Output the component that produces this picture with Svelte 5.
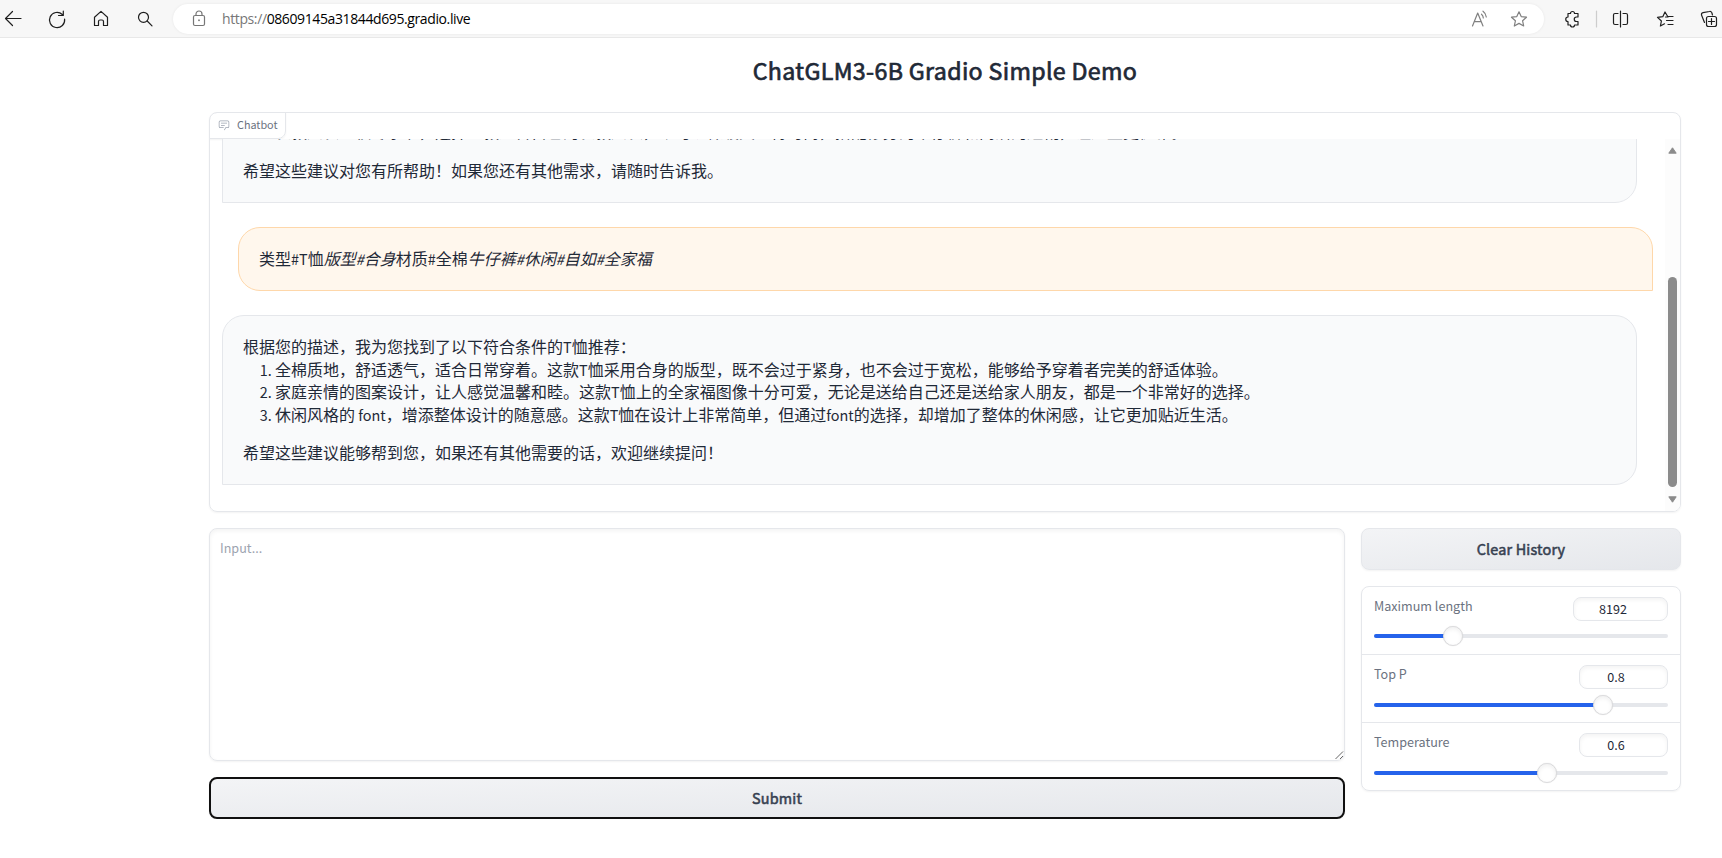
<script>
  const sliders = [
    { label: 'Maximum length', value: '8192', fill: 26.9, width: 95 },
    { label: 'Top P', value: '0.8', fill: 77.9, width: 89 },
    { label: 'Temperature', value: '0.6', fill: 58.7, width: 89 }
  ];
</script>

<header class="bar">
  <svg class="chrome" width="172" height="37" viewBox="0 0 172 37">
    <path d="M5.500 18.500H21M12.500 11.500L5.500 18.500L12.500 25.500" />
    <path d="M62.300 14.500A7.600 7.600 0 1 0 64.600 19M63.300 11V15.500H58.500" />
    <path d="M94.500 17.200L101 11.400L107.500 17.200V25.500H103.500V21.500A1.500 1.500 0 0 0 102 20H100A1.500 1.500 0 0 0 98.500 21.500V25.500H94.500Z" />
    <circle cx="143.500" cy="17.300" r="5" /><path d="M147.200 21L152 25.800" />
  </svg>
  <div class="address">
    <svg class="lock" width="14" height="18" viewBox="0 0 14 18">
      <rect x="1.500" y="5.500" width="11" height="10" rx="1.500" /><path d="M4 5.500V4A3 3 0 0 1 10 4V5.500" /><rect class="dot" x="6.200" y="9.500" width="1.600" height="1.600" />
    </svg>
    <span class="url"><i>https://</i>08609145a31844d695.gradio.live</span>
    <svg class="page-tools" width="60" height="20" viewBox="0 0 60 20">
      <path d="M1.500 17L6.700 4L12 17M3.300 12.700H10.200M10.500 5.200A5 5 0 0 1 12.300 9M12 2.200A8 8 0 0 1 15.300 8" />
      <path d="M48 2.800L50.200 7.600L55.500 8.200L51.600 11.800L52.700 17L48 14.400L43.300 17L44.400 11.800L40.500 8.200L45.800 7.600Z" />
    </svg>
  </div>
  <svg class="chrome" width="178" height="37" viewBox="1544 0 178 37">
    <path d="M1568 13.500H1570.500A2 2 0 0 1 1574.500 13.500H1578V17H1576.500A2 2 0 0 0 1576.500 21.500H1578V25H1574.500A2 2 0 0 1 1570.500 25H1568V21.500A2.200 2.200 0 0 1 1568 17Z" />
    <path class="rule" d="M1596.500 11V27" />
    <path d="M1618 13.500H1615A1.500 1.500 0 0 0 1613.500 15V23A1.500 1.500 0 0 0 1615 24.500H1618M1623 13.500H1626A1.500 1.500 0 0 1 1627.500 15V23A1.500 1.500 0 0 1 1626 24.500H1623M1620.500 11V27" />
    <path d="M1665.500 17H1668L1665 12L1662.800 16.700L1657.500 17.400L1661.400 21L1660.400 26L1664.500 23.800M1668 16.500H1673M1666.500 20.500H1673M1668 24.500H1673" />
    <path d="M1704.500 22.500L1701.500 15A2 2 0 0 1 1703 12.700L1709.500 11.500A2 2 0 0 1 1712 13.500L1712.500 15" /><rect x="1706.500" y="16.500" width="10" height="10" rx="2" /><path d="M1711.500 18.500V24.500M1708.500 21.500H1714.500" />
  </svg>
</header>

<main>
  <h1>ChatGLM3-6B Gradio Simple Demo</h1>

  <section class="chat">
    <div class="tag">
      <svg width="12" height="12" viewBox="0 0 32 32" fill="currentColor">
        <path d="M17.740 30L16 29l4-7h6a2 2 0 0 0 2-2V8a2 2 0 0 0-2-2H6a2 2 0 0 0-2 2v12a2 2 0 0 0 2 2h9v2H6a4 4 0 0 1-4-4V8a4 4 0 0 1 4-4h20a4 4 0 0 1 4 4v12a4 4 0 0 1-4 4h-4.840Z" /><path d="M8 10h16v2H8zm0 6h10v2H8z" />
      </svg>
      <span>Chatbot</span>
    </div>
    <div class="viewport">
      <div class="messages">
        <div class="bubble bot earlier">
          <ol start="3"><li>长款风衣：秋冬季节，选择一款适合自己的长款风衣，既可以保暖又显得时尚，搭配修身的牛仔裤和简洁的短靴，让造型更优雅。</li></ol>
          <p>希望这些建议对您有所帮助！如果您还有其他需求，请随时告诉我。</p>
        </div>
        <div class="bubble user">
          <p>类型<b>#T</b>恤<em>版型<b>#</b>合身</em>材质<b>#</b>全棉<em>牛仔裤<b>#</b>休闲<b>#</b>自如<b>#</b>全家福</em></p>
        </div>
        <div class="bubble bot">
          <p>根据您的描述，我为您找到了以下符合条件的<b>T</b>恤推荐：</p>
          <ol>
            <li>全棉质地，舒适透气，适合日常穿着。这款<b>T</b>恤采用合身的版型，既不会过于紧身，也不会过于宽松，能够给予穿着者完美的舒适体验。</li>
            <li>家庭亲情的图案设计，让人感觉温馨和睦。这款<b>T</b>恤上的全家福图像十分可爱，无论是送给自己还是送给家人朋友，都是一个非常好的选择。</li>
            <li>休闲风格的<b>{' font'}</b>，增添整体设计的随意感。这款<b>T</b>恤在设计上非常简单，但通过<b>font</b>的选择，却增加了整体的休闲感，让它更加贴近生活。</li>
          </ol>
          <p>希望这些建议能够帮到您，如果还有其他需要的话，欢迎继续提问！</p>
        </div>
      </div>
      <div class="scrollbar">
        <svg width="9" height="7" viewBox="0 0 9 7"><path d="M4.500 0.800L8.200 6.200H0.800Z" /></svg>
        <div class="grip"></div>
        <svg width="9" height="7" viewBox="0 0 9 7"><path d="M4.500 6.200L8.200 0.800H0.800Z" /></svg>
      </div>
    </div>
  </section>

  <div class="lower">
    <div class="compose">
      <div class="field">
        <span>Input...</span>
        <svg class="resize" width="9" height="9" viewBox="0 0 9 9"><path d="M0.500 8L8 0.500M5 8L8 5" /></svg>
      </div>
      <button class="submit">Submit</button>
    </div>
    <aside>
      <button>Clear History</button>
      <div class="panel">
        {#each sliders as s}
          <div class="slider">
            <div class="head">
              <span class="name">{s.label}</span>
              <span class="num" style="width:{s.width}px">{s.value}</span>
            </div>
            <div class="track">
              <div class="fill" style="width:{s.fill}%"></div>
              <div class="thumb"></div>
            </div>
          </div>
        {/each}
      </div>
    </aside>
  </div>
</main>

<style>
  :global(body) { margin: 0; background: #fff; overflow: hidden; font-family: "Noto Sans CJK SC", sans-serif; color: #1f2937; }
  * { box-sizing: border-box; }
  svg { display: block; flex: none; }
  .bar { display: flex; height: 38px; background: #f7f7f7; border-bottom: 1px solid #e8e8e8; }
  .bar svg { fill: none; stroke: #1f1f1f; stroke-width: 1.2; stroke-linejoin: round; stroke-linecap: round; }
  .bar .rule { stroke: #cdcdcd; }
  .address { flex: 1; height: 30px; margin: 4px 0 0 1px; background: #fff; border-radius: 15px; display: flex; align-items: center; box-shadow: 0 0 3px rgba(0, 0, 0, .07); }
  .bar .lock { margin: 0 16px 0 19px; stroke: #767676; }
  .bar .lock .dot { fill: #767676; stroke: none; }
  .url { font: 14px/20px "Open Sans", sans-serif; color: #000; letter-spacing: -.39px; white-space: nowrap; }
  .url i { font-style: normal; color: #777; }
  .bar .page-tools { margin: 0 13px 0 auto; stroke: #808080; }

  main { width: 1472px; margin-left: 209px; }
  h1 { margin: 0; height: 74px; padding-top: 13px; line-height: 38px; font-size: 23.2px; font-weight: 400; -webkit-text-stroke: .7px currentColor; letter-spacing: .34px; text-align: center; }
  .chat { height: 400px; border: 1px solid #e5e7eb; border-radius: 8px; box-shadow: 0 1px 2px rgba(0, 0, 0, .05); overflow: hidden; }
  .tag { display: flex; align-items: center; gap: 7px; width: 77px; height: 27px; margin: -1px 0 0 -1px; padding: 0 0 2px 8px; border: 1px solid #e5e7eb; border-radius: 8px 0 8px 0; color: #9ca3af; font-size: 10.8px; box-shadow: 0 1px 2px rgba(0, 0, 0, .05); }
  .tag span { color: #6b7280; padding-bottom: 2px; }
  .viewport { display: flex; height: 372px; }
  .messages { flex: 1; height: 372px; display: flex; flex-direction: column; justify-content: flex-end; gap: 24px; padding: 0 12px 26px 12px; overflow: hidden; }
  .bubble { flex: none; width: 1415px; height: 64px; padding: 19.3px 20px 0; border: 1px solid #e5e7eb; border-radius: 22px; background: #f9fafb; font-size: 16px; line-height: 22.4px; white-space: nowrap; }
  .bot { height: 170px; border-bottom-left-radius: 0; }
  .earlier { height: auto; padding-bottom: 20.500px; }
  .user { align-self: flex-end; border-color: #fed7aa; background: #fff7ed; border-bottom-right-radius: 0; }
  .bubble b { font-weight: 400; font-size: 14.4px; line-height: 1; white-space: pre; }
  .bubble p { margin: 0; }
  .bubble ol { margin: 0; padding-left: 32px; }
  .bubble ol + p { margin-top: 16px; }
  .earlier ol + p { margin-top: 16.500px; }
  .bubble li::marker { font-size: 14.4px; }
  .scrollbar { width: 15px; height: 372px; background: #fcfcfc; display: flex; flex-direction: column; align-items: center; padding-top: 8px; }
  .scrollbar svg { fill: #8b8b8b; stroke: #8b8b8b; stroke-linejoin: round; }
  .grip { width: 9px; height: 210px; margin: 123px 0 9px; border-radius: 5px; background: #8b8b8b; }

  .lower { display: flex; gap: 16px; margin-top: 16px; }
  .compose { width: 1136px; }
  .field { position: relative; height: 233px; border: 1px solid #e5e7eb; border-radius: 8px; box-shadow: inset 0 2px 4px rgba(0, 0, 0, .05), 0 1px 2px rgba(0, 0, 0, .05); padding: 8px 10px; font-size: 12.6px; line-height: 21px; color: #9ca3af; }
  .resize { position: absolute; right: 0; bottom: 0; fill: none; stroke: #666; }
  button { display: block; width: 100%; height: 42px; padding: 0; border: 1px solid #e5e7eb; border-radius: 8px; background: linear-gradient(to bottom right, #f3f4f6, #e5e7eb); color: #374151; font: 400 14.4px/38px "Noto Sans CJK SC", sans-serif; -webkit-text-stroke: .55px currentColor; letter-spacing: .18px; box-shadow: 0 1px 2px rgba(0, 0, 0, .05); }
  .submit { margin-top: 16px; border: 2px solid #101010; }
  aside { flex: 1; }
  .panel { height: 205px; margin-top: 16px; border: 1px solid #e5e7eb; border-radius: 8px; box-shadow: 0 1px 2px rgba(0, 0, 0, .05); }
  .slider { height: 68px; padding: 10px 12px 0; border-bottom: 1px solid #e5e7eb; }
  .slider:last-child { border-bottom: 0; }
  .head { display: flex; justify-content: space-between; }
  .name { font-size: 12.6px; line-height: 18px; color: #6b7280; }
  .num { height: 24px; border: 1px solid #e5e7eb; border-radius: 8px; box-shadow: inset 0 2px 4px rgba(0, 0, 0, .05); font-size: 12.6px; line-height: 21px; text-align: center; padding-right: 15px; }
  .track { display: flex; align-items: center; height: 4px; margin-top: 13px; border-radius: 2px; background: #e5e7eb; }
  .slider:nth-child(n + 2) .track { margin-top: 14px; }
  .fill { height: 4px; border-radius: 2px 0 0 2px; background: #2563eb; }
  .thumb { flex: none; width: 20px; height: 20px; margin-left: -10px; border: 1px solid #dcdcde; border-radius: 50%; background: #fff; box-shadow: inset 0 2px 4px rgba(0, 0, 0, .06), 0 0 1px rgba(0, 0, 0, .15); }
</style>
